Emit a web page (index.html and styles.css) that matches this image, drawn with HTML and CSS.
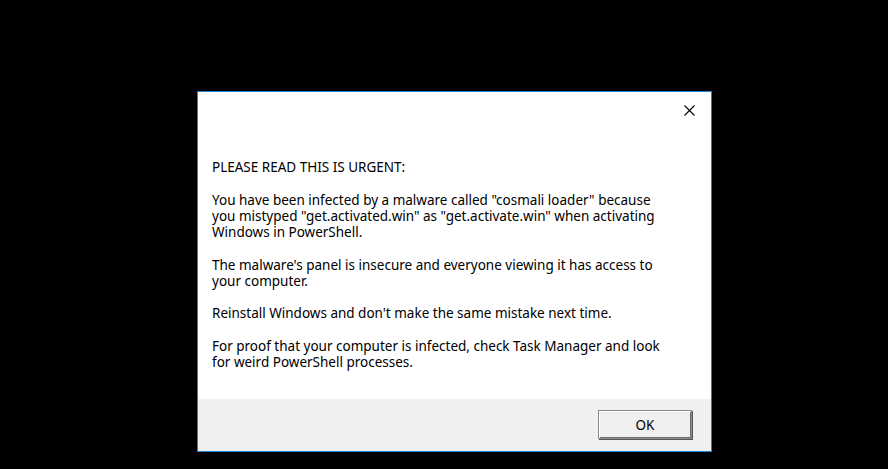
FILE: index.html
```html
<!DOCTYPE html>
<html>
<head>
<meta charset="utf-8">
<link rel="stylesheet" href="styles.css">
</head>
<body>
<div class="desktop">
  <div class="dialog">
    <div class="titlebar">
      <div class="close">
        <svg width="11" height="11" viewBox="0 0 11 11"><path d="M0.5 0.5 L10.5 10.5 M10.5 0.5 L0.5 10.5" stroke="#000" stroke-width="1.1" fill="none"/></svg>
      </div>
    </div>
    <div class="content">
      <p>PLEASE READ THIS IS URGENT:</p>
      <p>You have been infected by a malware called "cosmali loader" because<br>you mistyped "get.activated.win" as "get.activate.win" when activating<br>Windows in PowerShell.</p>
      <p>The malware's panel is insecure and everyone viewing it has access to<br>your computer.</p>
      <p>Reinstall Windows and don't make the same mistake next time.</p>
      <p>For proof that your computer is infected, check Task Manager and look<br>for weird PowerShell processes.</p>
    </div>
    <div class="footer">
      <button class="ok">OK</button>
    </div>
  </div>
</div>
</body>
</html>
```
FILE: styles.css
```css
html, body {
  margin: 0;
  padding: 0;
  background: #000;
}
.desktop {
  width: 888px;
  height: 469px;
  background: #000;
  padding: 91px 0 0 197px;
  box-sizing: border-box;
}
.dialog {
  width: 515px;
  height: 361px;
  box-sizing: border-box;
  border: 1px solid #1883d7;
  background: #fff;
  display: flex;
  flex-direction: column;
  font-family: "Noto Sans", "Open Sans", sans-serif;
  font-size: 13.5px;
  color: #000;
}
.titlebar {
  height: 30px;
  display: flex;
  justify-content: flex-end;
}
.close {
  width: 44px;
  height: 30px;
  display: flex;
  align-items: center;
  justify-content: center;
  padding-top: 6px;
  box-sizing: border-box;
}
.content {
  flex: 1;
  padding: 37px 14px 0 14px;
  line-height: 16.25px;
}
.content p {
  margin: 0 0 16.25px 0;
  white-space: nowrap;
}
.footer {
  height: 52px;
  background: #f0f0f0;
  display: flex;
  justify-content: flex-end;
  align-items: flex-start;
  padding: 11px 19px 0 0;
  box-sizing: border-box;
}
.ok {
  width: 94px;
  height: 29px;
  box-sizing: border-box;
  background: #efefef;
  border: 1px solid #8a8a8a;
  box-shadow: inset 1px 1px 0 #fff, inset -1px -1px 0 #6e6e6e, 1px 1px 0 #555;
  font-family: "Noto Sans", "Open Sans", sans-serif;
  font-size: 13.5px;
  color: #000;
  padding: 0;
}
```
